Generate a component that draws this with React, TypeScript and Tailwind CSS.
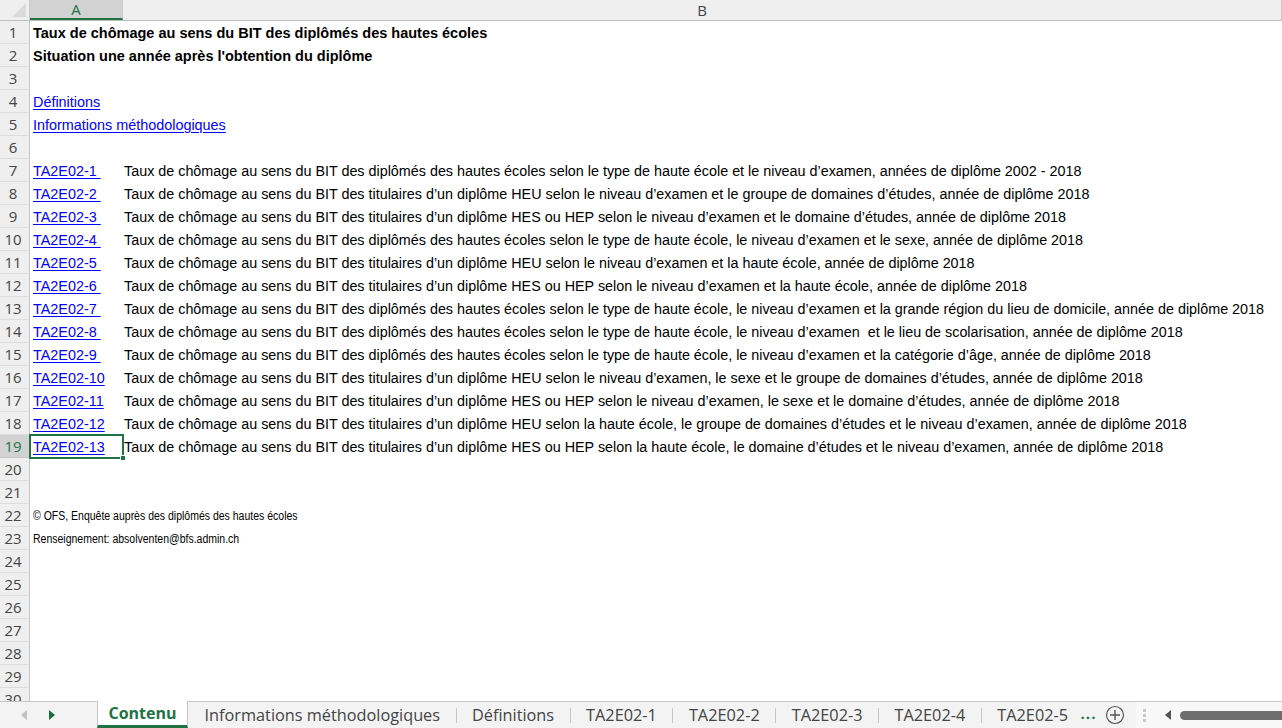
import React from 'react';

const rows: Record<number, { a?: string; b?: string; kind?: 'title' | 'link' | 'note' }> = {
  1: { a: 'Taux de chômage au sens du BIT des diplômés des hautes écoles', kind: 'title' },
  2: { a: "Situation une année après l'obtention du diplôme", kind: 'title' },
  4: { a: 'Définitions', kind: 'link' },
  5: { a: 'Informations méthodologiques', kind: 'link' },
  7: { a: 'TA2E02-1 ', b: 'Taux de chômage au sens du BIT des diplômés des hautes écoles selon le type de haute école et le niveau d’examen, années de diplôme 2002 - 2018' },
  8: { a: 'TA2E02-2 ', b: 'Taux de chômage au sens du BIT des titulaires d’un diplôme HEU selon le niveau d’examen et le groupe de domaines d’études, année de diplôme 2018' },
  9: { a: 'TA2E02-3 ', b: 'Taux de chômage au sens du BIT des titulaires d’un diplôme HES ou HEP selon le niveau d’examen et le domaine d’études, année de diplôme 2018' },
  10: { a: 'TA2E02-4 ', b: 'Taux de chômage au sens du BIT des diplômés des hautes écoles selon le type de haute école, le niveau d’examen et le sexe, année de diplôme 2018' },
  11: { a: 'TA2E02-5 ', b: 'Taux de chômage au sens du BIT des titulaires d’un diplôme HEU selon le niveau d’examen et la haute école, année de diplôme 2018' },
  12: { a: 'TA2E02-6 ', b: 'Taux de chômage au sens du BIT des titulaires d’un diplôme HES ou HEP selon le niveau d’examen et la haute école, année de diplôme 2018' },
  13: { a: 'TA2E02-7 ', b: 'Taux de chômage au sens du BIT des diplômés des hautes écoles selon le type de haute école, le niveau d’examen et la grande région du lieu de domicile, année de diplôme 2018' },
  14: { a: 'TA2E02-8 ', b: 'Taux de chômage au sens du BIT des diplômés des hautes écoles selon le type de haute école, le niveau d’examen  et le lieu de scolarisation, année de diplôme 2018' },
  15: { a: 'TA2E02-9 ', b: 'Taux de chômage au sens du BIT des diplômés des hautes écoles selon le type de haute école, le niveau d’examen et la catégorie d’âge, année de diplôme 2018' },
  16: { a: 'TA2E02-10', b: 'Taux de chômage au sens du BIT des titulaires d’un diplôme HEU selon le niveau d’examen, le sexe et le groupe de domaines d’études, année de diplôme 2018' },
  17: { a: 'TA2E02-11', b: 'Taux de chômage au sens du BIT des titulaires d’un diplôme HES ou HEP selon le niveau d’examen, le sexe et le domaine d’études, année de diplôme 2018' },
  18: { a: 'TA2E02-12', b: 'Taux de chômage au sens du BIT des titulaires d’un diplôme HEU selon la haute école, le groupe de domaines d’études et le niveau d’examen, année de diplôme 2018' },
  19: { a: 'TA2E02-13', b: 'Taux de chômage au sens du BIT des titulaires d’un diplôme HES ou HEP selon la haute école, le domaine d’études et le niveau d’examen, année de diplôme 2018' },
  22: { a: '© OFS, Enquête auprès des diplômés des hautes écoles', kind: 'note' },
  23: { a: 'Renseignement: absolventen@bfs.admin.ch', kind: 'note' },
};

const tabs = ['Informations méthodologiques', 'Définitions', 'TA2E02-1', 'TA2E02-2', 'TA2E02-3', 'TA2E02-4', 'TA2E02-5'];

const cellFont = { fontFamily: '"Liberation Sans", Arial, sans-serif' };
const uiFont = { fontFamily: '"Open Sans", "Noto Sans", sans-serif' };

function Row({ n }: { n: number }) {
  const r = rows[n];
  const sel = n === 19;
  const isLinkA = r && (r.kind === 'link' || r.b);
  return (
    <div className="flex h-[23px] shrink-0">
      <div
        className={`flex w-[30px] shrink-0 items-center justify-center border-b border-r text-[15px] leading-none ${
          sel ? 'border-b-[#c6c6c6] border-r-[#217346] bg-[#d2d2d2] text-[#217346]' : 'border-b-[#dcdcdc] border-r-[#c6c6c6] bg-[#efefef] text-[#444]'
        }`}
        style={uiFont}
      >
        <span className="pr-[3px]">{n}</span>
      </div>
      <div className={`relative w-[93px] shrink-0 ${sel ? 'outline-2 outline-[#217346] -outline-offset-1 z-10' : ''}`}>
        {r?.a && (
          <div className="absolute bottom-0 left-[3px] flex h-[23px] items-end pb-[2px] whitespace-pre" style={cellFont}>
            {r.kind === 'title' && <span className="text-[14.5px] font-bold leading-[18px] text-black">{r.a}</span>}
            {isLinkA && <span className="text-[14.4px] leading-[18px] text-[#0000ff] underline underline-offset-2">{r.a}</span>}
            {r.kind === 'note' && <span className="inline-block origin-left scale-x-[0.875] text-[12px] leading-[18px] text-black">{r.a}</span>}
          </div>
        )}
        {sel && <div className="absolute -bottom-[3px] -right-[3px] h-[6px] w-[6px] border border-white bg-[#217346]" />}
      </div>
      <div className="flex flex-1 items-end pb-[2px] pl-[1px] whitespace-pre" style={cellFont}>
        {r?.b && <span className="text-[14.35px] leading-[18px] text-black">{r.b}</span>}
      </div>
    </div>
  );
}

export default function App() {
  return (
    <div className="flex h-[728px] w-[1282px] flex-col overflow-hidden bg-white">
      {/* column headers */}
      <div className="flex h-[21px] shrink-0 border-b border-[#bdbdbd] bg-[#efefef]">
        <div className="relative w-[30px] shrink-0 border-r border-[#c6c6c6]">
          <svg className="absolute right-[3px] bottom-[3px]" width="14" height="14" viewBox="0 0 14 14">
            <polygon points="14,0 14,14 0,14" fill="#dadada" />
          </svg>
        </div>
        <div className="flex w-[93px] shrink-0 items-center justify-center border-r border-[#c6c6c6] border-b-2 border-b-[#217346] bg-[#d2d2d2] text-[15px] leading-none text-[#217346]" style={uiFont}>
          A
        </div>
        <div className="flex flex-1 items-center justify-center border-r border-[#c6c6c6] text-[15px] leading-none text-[#444]" style={uiFont}>
          B
        </div>
      </div>

      {/* grid */}
      <div className="flex flex-1 flex-col overflow-hidden">
        {Array.from({ length: 30 }, (_, i) => (
          <Row key={i} n={i + 1} />
        ))}
      </div>

      {/* sheet tabs */}
      <div className="flex h-[27px] shrink-0 items-stretch border-t border-[#c6c6c6] bg-[#f3f3f3] text-[16.3px] text-[#444]" style={uiFont}>
        <div className="flex w-[97px] shrink-0 items-center gap-[22px] pl-[21px]">
          <svg width="6" height="10" viewBox="0 0 6 10"><polygon points="6,0 6,10 0,5" fill="#c2c2c2" /></svg>
          <svg width="6" height="10" viewBox="0 0 6 10"><polygon points="0,0 0,10 6,5" fill="#1e6b3e" /></svg>
        </div>
        <div className="-mt-px flex w-[91px] shrink-0 items-center justify-center border-x border-[#c6c6c6] border-b-[3px] border-b-[#217346] bg-white text-[16px] font-bold text-[#217346]">
          Contenu
        </div>
        <div className="flex items-center pl-[1px]">
          {tabs.map((t, i) => (
            <div key={t} className="flex items-center">
              <span className="px-[15.5px]">{t}</span>
              {i < tabs.length - 1 && <span className="h-[15px] w-px bg-[#c6c6c6]" />}
            </div>
          ))}
          <span className="ml-[-3px] pb-[4px] text-[15px] font-bold tracking-[1px] text-[#217346]">...</span>
        </div>
        <div className="flex flex-1 items-center justify-end pr-[11px]">
          <svg width="20" height="20" viewBox="0 0 20 20">
            <circle cx="10" cy="10" r="8.5" fill="none" stroke="#555" strokeWidth="1.2" />
            <path d="M10 5v10M5 10h10" stroke="#555" strokeWidth="1.4" />
          </svg>
        </div>
        <div className="flex w-[146px] shrink-0 items-center bg-[#f8f8f8]">
          <div className="ml-[7px] flex flex-col gap-[2px]">
            <span className="h-[3px] w-[3px] bg-[#c8c8c8]" />
            <span className="h-[3px] w-[3px] bg-[#c8c8c8]" />
            <span className="h-[3px] w-[3px] bg-[#c8c8c8]" />
          </div>
          <svg className="ml-[19px]" width="6" height="10" viewBox="0 0 6 10"><polygon points="6,0 6,10 0,5" fill="#555" /></svg>
          <div className="ml-[9px] h-[9px] flex-1 rounded-l-full bg-[#6e6e6e]" />
        </div>
      </div>
    </div>
  );
}
